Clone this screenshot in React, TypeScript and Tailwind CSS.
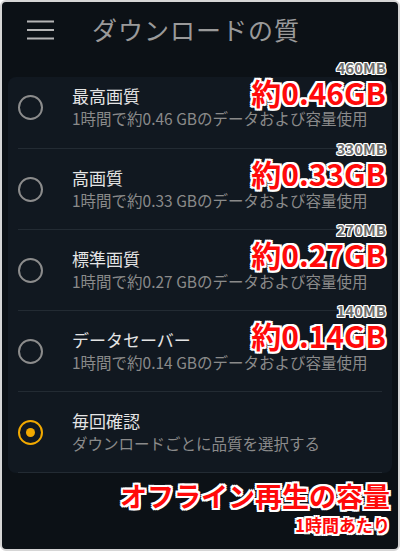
const rows = [
  { title: '最高画質', sub: '1時間で約0.46 GBのデータおよび容量使用', mb: '460MB', gb: '約0.46GB' },
  { title: '高画質', sub: '1時間で約0.33 GBのデータおよび容量使用', mb: '330MB', gb: '約0.33GB' },
  { title: '標準画質', sub: '1時間で約0.27 GBのデータおよび容量使用', mb: '270MB', gb: '約0.27GB' },
  { title: 'データセーバー', sub: '1時間で約0.14 GBのデータおよび容量使用', mb: '140MB', gb: '約0.14GB' },
  { title: '毎回確認', sub: 'ダウンロードごとに品質を選択する', selected: true },
];

const outline =
  '[text-shadow:-2px_-2px_0_#fff,2px_-2px_0_#fff,-2px_2px_0_#fff,2px_2px_0_#fff,0_2px_0_#fff,0_-2px_0_#fff,2px_0_0_#fff,-2px_0_0_#fff]';
const thinOutline =
  '[text-shadow:-1px_-1px_0_#fff,1px_-1px_0_#fff,-1px_1px_0_#fff,1px_1px_0_#fff,0_1px_0_#fff,0_-1px_0_#fff,1px_0_0_#fff,-1px_0_0_#fff]';

function Radio({ selected }: { selected?: boolean }) {
  if (selected) {
    return (
      <div className="w-[25px] h-[25px] rounded-full border-2 border-[#f2a900] flex items-center justify-center shrink-0">
        <div className="w-[9px] h-[9px] rounded-full bg-[#f2a900]" />
      </div>
    );
  }
  return <div className="w-[25px] h-[25px] rounded-full border-2 border-[#8c8c8c] shrink-0" />;
}

export default function App() {
  return (
    <div className="w-[400px] h-[551px] bg-[#0c1116] border-2 border-[#d6d6d6] rounded-md overflow-hidden flex flex-col font-['Noto_Sans_CJK_JP',sans-serif]">
      <div className="h-[56px] flex items-center pl-[25px] shrink-0">
        <svg width="28" height="20" viewBox="0 0 28 20" className="text-[#b5b5b5]">
          <path d="M0 1.5h27M0 10h27M0 18.5h27" stroke="currentColor" strokeWidth="2" />
        </svg>
        <h1 className="ml-[37px] text-[25px] text-[#9a9a9a] tracking-[1px]">ダウンロードの質</h1>
      </div>

      <div className="px-[6px] pt-[19px]">
        <div className="bg-[#111820] rounded-lg">
          {rows.map((row, i) => (
            <div
              key={i}
              className={`relative mx-[10px] flex items-center ${
                i === 0 ? 'h-[71px] pb-[11px]' : 'h-[81px] border-t border-[#232b33]'
              }`}
            >
              <Radio selected={row.selected} />
              <div className="ml-[29px] flex flex-col">
                <div className="text-[17px] leading-[22px] text-[#e4e4e4]">{row.title}</div>
                <div className="text-[15.5px] leading-[22px] text-[#8a8a8a] whitespace-nowrap">{row.sub}</div>
              </div>
              {row.mb && (
                <div
                  className={`absolute right-[-4px] flex flex-col items-end ${
                    i === 0 ? 'top-[-18px]' : 'top-[-9px]'
                  }`}
                >
                  <div className={`text-[15px] leading-[17px] font-bold text-[#6e6e6e] ${thinOutline}`}>{row.mb}</div>
                  <div className={`text-[30px] leading-[32px] font-bold text-[#ff0a0a] ${outline}`}>{row.gb}</div>
                </div>
              )}
            </div>
          ))}
          <div className="mx-[10px] border-t border-[#232b33]" />
        </div>
      </div>

      <div className="flex flex-col items-end pr-[8px] pt-[6px]">
        <div className={`text-[27px] leading-[34px] font-bold text-[#ff0a0a] ${outline}`}>オフライン再生の容量</div>
        <div className={`text-[17px] leading-[20px] font-bold text-[#ff0a0a] mt-[2px] ${outline}`}>1時間あたり</div>
      </div>
    </div>
  );
}
